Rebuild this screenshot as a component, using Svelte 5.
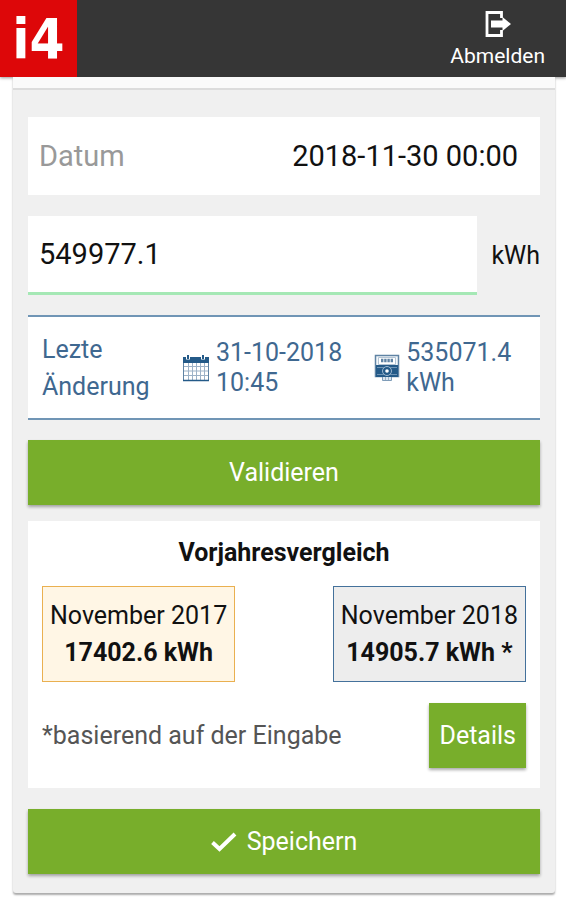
<script lang="ts">
	let reading = $state('549977.1');

	const date = '2018-11-30 00:00';
	const lastChange = { date: '31-10-2018', time: '10:45', value: '535071.4', unit: 'kWh' };
	const months = [
		{ label: 'November 2017', value: '17402.6 kWh', kind: 'previous' },
		{ label: 'November 2018', value: '14905.7 kWh *', kind: 'current' }
	];
</script>

<header>
	<a class="logo" href="/">i4</a>
	<button class="logout">
		<svg width="26" height="28" viewBox="0 0 26 28" aria-hidden="true">
			<path d="M16.500 8V2.500H2v23h14.500V20" fill="none" stroke="#fff" stroke-width="2.800" />
			<path d="M6 10.500h11.500V7l8.500 7-8.500 7v-3.500H6z" fill="#fff" />
		</svg>
		Abmelden
	</button>
</header>

<main>
	<div class="card-head"></div>
	<form class="card-body" onsubmit={(e) => e.preventDefault()}>
		<div class="date">
			<span class="label">Datum</span>
			<time>{date}</time>
		</div>

		<div class="reading">
			<input id="reading" type="text" inputmode="decimal" bind:value={reading} />
			<label for="reading">kWh</label>
		</div>

		<section class="last-change">
			<div class="title">Lezte Änderung</div>
			<div class="entry">
				<svg width="28" height="28" viewBox="0 0 28 28" aria-hidden="true">
					<path d="M1 3h26v6H1z" fill="#245a88" />
					<path d="M6 1v4.500M21 1v4.500" stroke="#fff" stroke-width="4" />
					<path d="M6 1v4M21 1v4" stroke="#245a88" stroke-width="2" />
					<path d="M1.500 9v17.500h25V9" fill="none" stroke="#5f83a4" />
					<path
						d="M6.500 9v17M10.500 9v17M14.500 9v17M18.500 9v17M22.500 9v17M2 12.500h24M2 17h24M2 21.500h24"
						fill="none"
						stroke="#9db2c7"
					/>
					<path d="M1 26.500h26" stroke="#245a88" stroke-width="1.500" />
				</svg>
				<div>{lastChange.date}<br />{lastChange.time}</div>
			</div>
			<div class="entry meter">
				<svg width="26" height="28" viewBox="0 0 26 28" aria-hidden="true">
					<path d="M1.500 1.500h23v21h-23z" fill="#f3f7fa" stroke="#5f83a4" stroke-width="1.500" />
					<path d="M4.500 3.500h17v7h-17z" fill="#fff" stroke="#b4c5d5" />
					<path d="M7 6.500h12" stroke="#5f83a4" stroke-width="3.500" stroke-dasharray="2.400 .8" />
					<path d="M2 11h22v12H2z" fill="#245a88" />
					<path d="M3 13.500h20M3 20.500h20" stroke="#6f94b5" />
					<circle cx="13" cy="17" r="4.500" fill="#245a88" stroke="#9db8d0" />
					<circle cx="13" cy="17" r="1.800" fill="#fff" />
					<path d="M8.500 23v3.500h9V23" fill="#dbe5ee" stroke="#7f9cb8" />
					<path d="M11.500 23v3M14.500 23v3" stroke="#9db2c7" />
				</svg>
				<div>{lastChange.value}<br />{lastChange.unit}</div>
			</div>
		</section>

		<button class="action" type="button">Validieren</button>

		<section class="compare">
			<h2>Vorjahresvergleich</h2>
			<div class="months">
				{#each months as month}
					<div class="month {month.kind}">
						<div>{month.label}</div>
						<strong>{month.value}</strong>
					</div>
				{/each}
			</div>
			<div class="note">
				<span>*basierend auf der Eingabe</span>
				<button class="action details" type="button">Details</button>
			</div>
		</section>

		<button class="action save" type="submit">
			<svg width="26" height="20" viewBox="0 0 26 20" aria-hidden="true">
				<path d="M1.500 10.500l7 6.500L24 2" fill="none" stroke="#fff" stroke-width="4" />
			</svg>
			Speichern
		</button>
	</form>
</main>

<style>
	:global(body) {
		margin: 0;
		background: #fff;
		color: #111;
		font-family: Roboto, sans-serif;
		font-size: 25px;
	}

	button,
	input {
		font: inherit;
		border: none;
		border-radius: 0;
	}

	button {
		cursor: pointer;
	}

	header {
		display: flex;
		justify-content: space-between;
		height: 77px;
		background: #363636;
		box-shadow: 0 1px 3px #0006;
	}

	.logo {
		width: 77px;
		background: #dd0709;
		color: #fff;
		font-family: 'DejaVu Sans Condensed', 'DejaVu Sans', sans-serif;
		font-size: 56px;
		font-weight: bold;
		line-height: 78px;
		text-align: center;
		text-decoration: none;
	}

	.logout {
		display: flex;
		flex-direction: column;
		align-items: center;
		gap: 4px;
		padding: 10px 21px 0;
		background: none;
		color: #fff;
		font-size: 21px;
		line-height: 28px;
	}

	main {
		margin: 0 11px 6px 13px;
		background: #f0f0f0;
		border-radius: 0 0 3px 3px;
		box-shadow: 0 2px 2px #0005;
	}

	.card-head {
		height: 11px;
		background: #fafafa;
		border-bottom: 2px solid #dcdcdc;
	}

	.card-body {
		display: flex;
		flex-direction: column;
		padding: 27px 15px 19px;
	}

	.date {
		display: flex;
		align-items: center;
		justify-content: space-between;
		height: 78px;
		padding: 0 22px 0 11px;
		box-sizing: border-box;
		background: #fff;
		font-size: 29px;
		line-height: 34px;
	}

	.label {
		color: #999;
	}

	.reading {
		display: flex;
		align-items: center;
		gap: 14px;
		margin: 21px 0 20px;
	}

	.reading input {
		flex: 1;
		min-width: 0;
		height: 79px;
		box-sizing: border-box;
		padding: 0 11px;
		border-bottom: 3px solid #a5e8b5;
		background: #fff;
		color: #111;
		font-size: 29px;
		outline: none;
	}

	.last-change {
		display: flex;
		align-items: center;
		gap: 26px;
		padding: 14px 14px 13px;
		border-top: 2px solid #7095b5;
		border-bottom: 2px solid #7095b5;
		background: #fff;
		color: #3f6890;
		line-height: 30px;
	}

	.title {
		width: 114px;
		line-height: 37px;
	}

	.entry {
		display: flex;
		align-items: center;
		gap: 6px;
	}

	.meter {
		margin-left: 6px;
	}

	.action {
		height: 65px;
		margin-top: 20px;
		background: #78ae2b;
		box-shadow: 0 2px 3px #0005;
		color: #fff;
	}

	.compare {
		margin-top: 16px;
		padding: 14px 14px 20px;
		background: #fff;
	}

	h2 {
		margin: 0 0 15px;
		font-size: 25px;
		line-height: 36px;
		text-align: center;
	}

	.months {
		display: flex;
		justify-content: space-between;
	}

	.month {
		padding: 10px 7px;
		border: 1px solid;
		line-height: 37px;
		text-align: center;
	}

	.previous {
		border-color: #eab050;
		background: #fff6e5;
	}

	.current {
		border-color: #44719b;
		background: #ededed;
	}

	.note {
		display: flex;
		align-items: center;
		justify-content: space-between;
		margin-top: 21px;
		color: #555;
	}

	.details {
		margin: 0;
		padding: 0 10px;
	}

	.save {
		display: flex;
		align-items: center;
		justify-content: center;
		gap: 10px;
		margin-top: 21px;
	}
</style>
